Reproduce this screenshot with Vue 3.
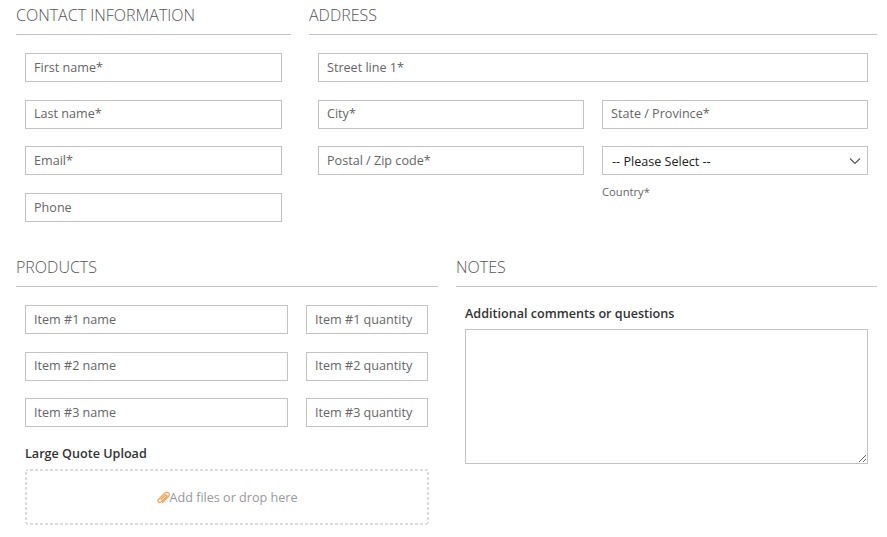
<template>
  <form class="quote-form" @submit.prevent>
    <div class="row row-top">
      <section class="section">
        <h2 class="section-title">Contact information</h2>
        <div class="section-body stack">
          <input v-for="name in contactFields" :key="name" class="field" type="text" :placeholder="name" />
        </div>
      </section>

      <section class="section">
        <h2 class="section-title">Address</h2>
        <div class="section-body stack">
          <input class="field" type="text" placeholder="Street line 1*" />
          <div class="pair">
            <input class="field" type="text" placeholder="City*" />
            <input class="field" type="text" placeholder="State / Province*" />
          </div>
          <div class="pair">
            <input class="field" type="text" placeholder="Postal / Zip code*" />
            <div>
              <div class="select-wrap">
                <select class="field select">
                  <option>-- Please Select --</option>
                </select>
                <svg class="select-arrow" width="12" height="8" viewBox="0 0 12 8" aria-hidden="true">
                  <path d="M1 1.5l5 5 5-5" fill="none" stroke="#555" stroke-width="1.1" />
                </svg>
              </div>
              <div class="hint">Country*</div>
            </div>
          </div>
        </div>
      </section>
    </div>

    <div class="row row-bottom">
      <section class="section">
        <h2 class="section-title">Products</h2>
        <div class="section-body">
          <div class="stack">
            <div v-for="n in 3" :key="n" class="item-row">
              <input class="field" type="text" :placeholder="`Item #${n} name`" />
              <input class="field" type="text" :placeholder="`Item #${n} quantity`" />
            </div>
          </div>
          <div class="label upload-label">Large Quote Upload</div>
          <div class="dropzone">
            <svg class="clip" width="13" height="13" viewBox="0 0 13 13" aria-hidden="true">
              <path d="M5.2 11.8l6-6c1.2-1.2 1.4-2.9.4-3.9s-2.7-.8-3.9.4L1.6 8.4c-.8.8-.9 2-.2 2.7s1.9.6 2.7-.2l5.3-5.3c.4-.4.5-1 .1-1.4s-1-.3-1.4.1L3.6 8.8" fill="none" stroke="#f2a055" stroke-width="1.3" />
            </svg>
            <span>Add files or drop here</span>
          </div>
        </div>
      </section>

      <section class="section">
        <h2 class="section-title">Notes</h2>
        <div class="section-body notes-body">
          <label class="label" for="comments">Additional comments or questions</label>
          <textarea id="comments" class="field notes"></textarea>
        </div>
      </section>
    </div>
  </form>
</template>

<script setup>
const contactFields = ['First name*', 'Last name*', 'Email*', 'Phone']
</script>

<style>
body {
  background: #fff;
}
</style>

<style scoped>
.quote-form {
  width: 861px;
  height: 537px;
  margin-left: 16px;
  overflow: hidden;
  font-family: "Open Sans", sans-serif;
  font-size: 12.6px;
  color: #333;
}

.row {
  display: grid;
  column-gap: 18px;
}

.row-top {
  grid-template-columns: 275px 568px;
  height: 252px;
}

.row-bottom {
  grid-template-columns: 422px 421px;
}

/* ---- section headers ---- */
.section-title {
  height: 35px;
  margin: 0;
  border-bottom: 1px solid #c4c4c4;
  box-sizing: border-box;
  font-size: 16px;
  font-weight: 300;
  line-height: 30px;
  text-transform: uppercase;
  color: #555;
}

.section-body {
  padding: 18px 9px 0;
}

.stack {
  display: flex;
  flex-direction: column;
  gap: 17.67px;
}

.pair {
  display: grid;
  grid-template-columns: 266px 266px;
  column-gap: 18px;
}

.item-row {
  display: grid;
  grid-template-columns: 263px 122px;
  column-gap: 18px;
}

/* ---- inputs ---- */
.field {
  display: block;
  width: 100%;
  height: 29px;
  box-sizing: border-box;
  padding: 0 8px 0.5px;
  border: 1px solid #c4c4c4;
  border-radius: 0;
  background: #fff;
  font-family: inherit;
  font-size: 12.6px;
  color: #333;
  outline: none;
}

.field::placeholder {
  color: #666;
  opacity: 1;
}

.select-wrap {
  position: relative;
}

.select {
  appearance: none;
  padding: 1px 8px 0 9px;
  color: #222;
}

.select-arrow {
  position: absolute;
  top: 11px;
  right: 7px;
  pointer-events: none;
}

.hint {
  margin-top: 9px;
  font-size: 11.2px;
  line-height: 15px;
  color: #666;
}

/* ---- labels, upload, notes ---- */
.label {
  display: block;
  font-size: 12.6px;
  font-weight: 600;
  line-height: 18px;
  color: #333;
}

.upload-label {
  margin-top: 18px;
}

/* the browser's 2px dashes come out too long here, so draw them by hand */
.dropzone {
  display: flex;
  align-items: center;
  justify-content: center;
  width: 404px;
  height: 56px;
  margin-top: 6px;
  box-sizing: border-box;
  border-radius: 4px;
  background-image:
    repeating-linear-gradient(90deg, #dcdcdc 0 3px, transparent 3px 5px),
    repeating-linear-gradient(90deg, #dcdcdc 0 3px, transparent 3px 5px),
    repeating-linear-gradient(0deg, #dcdcdc 0 3px, transparent 3px 5px),
    repeating-linear-gradient(0deg, #dcdcdc 0 3px, transparent 3px 5px);
  background-size: 100% 2px, 100% 2px, 2px 100%, 2px 100%;
  background-position: 0 0, 0 100%, 0 0, 100% 0;
  background-repeat: no-repeat;
  color: #999;
}

.clip {
  flex-shrink: 0;
}

.notes-body {
  padding-top: 18px;
}

.notes-body .label {
  margin-bottom: 6px;
}

.notes {
  height: 135px;
  width: 403px;
  padding: 8px;
}
</style>
